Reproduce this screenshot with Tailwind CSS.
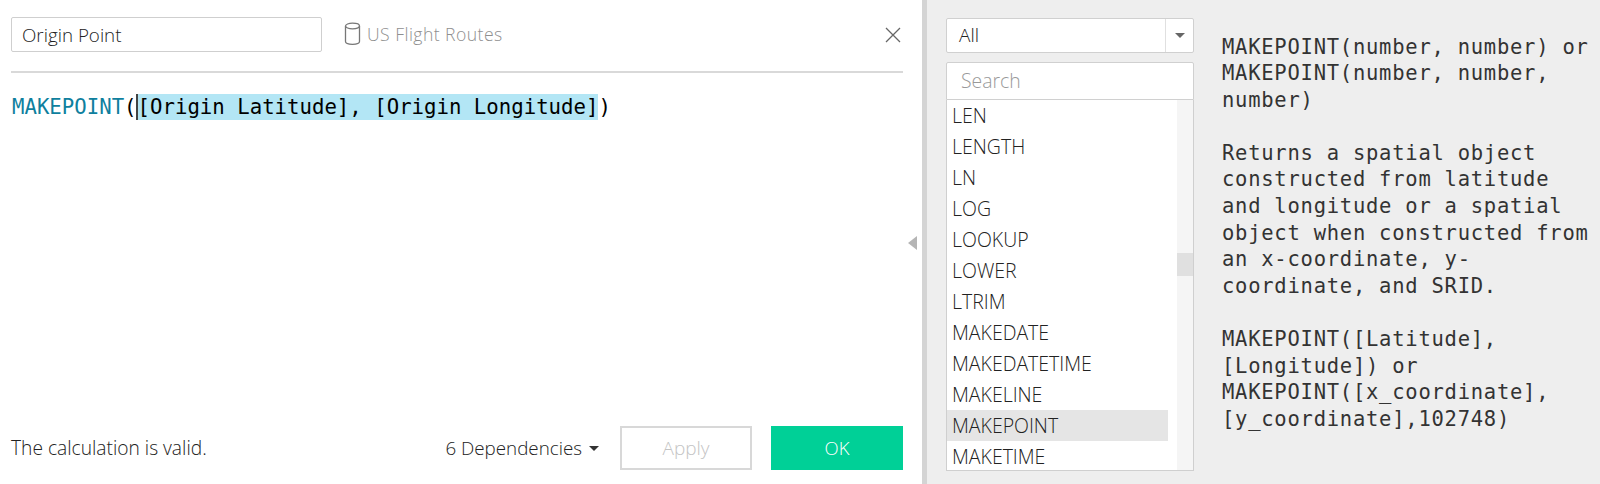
<!DOCTYPE html>
<html lang="en">
<head>
    <meta charset="UTF-8">
    <title>Origin Point</title>
    <script src="https://cdn.jsdelivr.net/npm/@tailwindcss/browser@4"></script>
</head>
<body class="bg-white">
    <div class="flex w-[1600px] h-[484px] overflow-hidden font-['Open_Sans',sans-serif] font-light text-[#222]">
        <!-- Editor -->
        <div class="w-[922px] h-full shrink-0 flex flex-col pl-[11px] pr-[19px] bg-white">
            <div class="h-[73px] border-b-2 border-[#d9d9d9] flex items-center shrink-0 pb-[2px]">
                <div class="w-[311px] h-[35px] border border-[#cfcfcf] rounded-[2px] flex items-center pl-[10px] text-[18.8px] pt-[1px]">Origin Point</div>
                <div class="flex items-center ml-[22px] text-[#8f8f8f] text-[17.6px] tracking-[0.45px]">
                    <svg class="w-[17px] h-[24px] mr-[6px]" viewBox="0 0 17 24" fill="none" stroke="#777" stroke-width="1.3">
                        <ellipse cx="8.5" cy="4" rx="7" ry="2.8"></ellipse>
                        <path d="M1.5 4v15.5c0 1.8 3 2.8 7 2.8s7-1 7-2.8V4"></path>
                    </svg>
                    US Flight Routes
                </div>
                <svg class="w-[16px] h-[16px] ml-auto mr-[2px]" viewBox="0 0 16 16" stroke="#666" stroke-width="1.3" fill="none">
                    <path d="M1 1l14 14M15 1L1 15"></path>
                </svg>
            </div>
            <div class="flex-1 pt-[21px] font-['DejaVu_Sans_Mono',monospace] font-normal text-[20.7px] leading-[26px] text-black whitespace-pre"><span class="text-[#0f7f9e] ml-[1px]">MAKEPOINT</span>(<span class="inline-block h-[26px] border-l-2 border-[#444] bg-[#b3e6f5] -ml-[1px]">[Origin Latitude], [Origin Longitude]</span>)</div>
            <div class="flex items-center h-[44px] mb-[14px] shrink-0">
                <span class="text-[19.2px]">The calculation is valid.</span>
                <span class="ml-auto text-[18.8px]">6 Dependencies</span>
                <span class="ml-[7px] mr-[21px] w-0 h-0 border-x-[5px] border-x-transparent border-t-[5px] border-t-[#333]"></span>
                <button class="w-[132px] h-[44px] border-2 border-[#d8d8d8] text-[#c4c4c4] text-[19px]">Apply</button>
                <button class="w-[132px] h-[44px] ml-[19px] bg-[#00d097] text-white text-[18.5px]">OK</button>
            </div>
        </div>

        <!-- Right side -->
        <div class="flex-1 h-full flex bg-[#eeeeee] border-l-[5px] border-[#d4d4d4]">
            <div class="w-[248px] ml-[19px] pt-[18px] shrink-0 flex flex-col">
                <div class="h-[35px] flex bg-white border border-[#d0d0d0] rounded-[2px]">
                    <div class="flex-1 flex items-center pl-[12px] text-[19px]">All</div>
                    <div class="w-[28px] border-l border-[#e0e0e0] flex items-center justify-center">
                        <span class="w-0 h-0 border-x-[5px] border-x-transparent border-t-[5px] border-t-[#666]"></span>
                    </div>
                </div>
                <div class="h-[38px] mt-[9px] bg-white border border-[#d0d0d0] rounded-t-[2px] flex items-center pl-[14px] text-[19.4px] text-[#999]">Search</div>
                <div class="h-[371px] flex bg-white border-x border-b border-[#cfcfcf] overflow-hidden">
                    <div class="flex-1 text-[19.5px] leading-[31px] overflow-hidden">
                        <div class="pl-[5px] w-[221px]">LEN</div>
                        <div class="pl-[5px] w-[221px]">LENGTH</div>
                        <div class="pl-[5px] w-[221px]">LN</div>
                        <div class="pl-[5px] w-[221px]">LOG</div>
                        <div class="pl-[5px] w-[221px]">LOOKUP</div>
                        <div class="pl-[5px] w-[221px]">LOWER</div>
                        <div class="pl-[5px] w-[221px]">LTRIM</div>
                        <div class="pl-[5px] w-[221px]">MAKEDATE</div>
                        <div class="pl-[5px] w-[221px]">MAKEDATETIME</div>
                        <div class="pl-[5px] w-[221px]">MAKELINE</div>
                        <div class="pl-[5px] w-[221px] bg-[#e5e5e5]">MAKEPOINT</div>
                        <div class="pl-[5px] w-[221px]">MAKETIME</div>
                    </div>
                    <div class="w-[16px] bg-[#f5f5f5] pt-[153px] shrink-0">
                        <div class="h-[23px] bg-[#e0e0e0]"></div>
                    </div>
                </div>
            </div>
            <div class="ml-[28px] pt-[33.5px] font-['DejaVu_Sans_Mono',monospace] font-normal text-[20.5px] leading-[26.6px] text-[#333] whitespace-pre tracking-[0.75px]">MAKEPOINT(number, number) or
MAKEPOINT(number, number,
number)

Returns a spatial object
constructed from latitude
and longitude or a spatial
object when constructed from
an x-coordinate, y-
coordinate, and SRID.

MAKEPOINT([Latitude],
[Longitude]) or
MAKEPOINT([x_coordinate],
[y_coordinate],102748)</div>
        </div>
    </div>
    <!-- collapse handle -->
    <span class="absolute left-[908px] top-[236px] w-0 h-0 border-y-[7px] border-y-transparent border-r-[9px] border-r-[#b5b5b5]"></span>
</body>
</html>
